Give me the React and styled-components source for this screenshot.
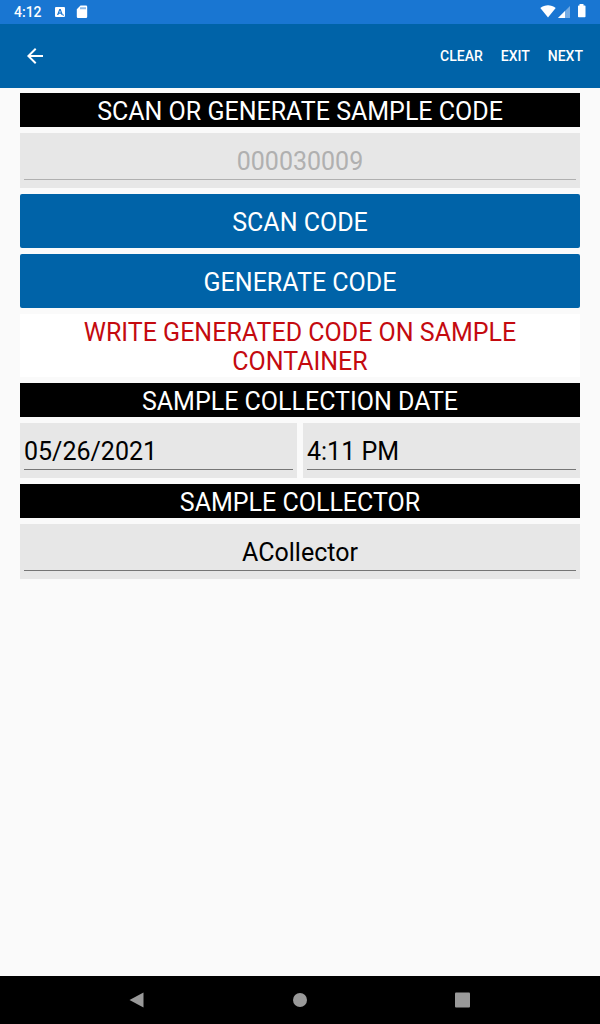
import React from "react";
import styled, { createGlobalStyle } from "styled-components";

const GlobalStyle = createGlobalStyle`
  * { box-sizing: border-box; }
  body {
    margin: 0;
    background: #fafafa;
    font-family: Roboto, "Liberation Sans", sans-serif;
  }
  button, input { font-family: inherit; margin: 0; }
`;

const Screen = styled.div`
  min-height: 100vh;
  display: flex;
  flex-direction: column;
`;

const StatusBar = styled.div`
  height: 24px;
  padding: 0 12px 0 14px;
  display: flex;
  align-items: center;
  justify-content: space-between;
  background: #1976d2;
  color: #fff;
`;

const StatusGroup = styled.div`
  display: flex;
  align-items: center;
`;

const Clock = styled.span`
  font-size: 14px;
  line-height: 24px;
  font-weight: 500;
  margin-right: 12px;
`;

const Glyph = styled.svg`
  display: block;
  fill: currentColor;
`;

const AppBar = styled.header`
  height: 64px;
  padding: 0 8px 0 15px;
  display: flex;
  align-items: center;
  justify-content: space-between;
  background: #0063a8;
  color: #fff;
`;

const BackButton = styled.button`
  width: 40px;
  height: 40px;
  padding: 0;
  display: grid;
  place-items: center;
  border: 0;
  background: none;
  color: inherit;
`;

const Actions = styled.nav`
  display: flex;
`;

const ActionButton = styled.button`
  height: 40px;
  padding: 0 9px;
  border: 0;
  background: none;
  color: inherit;
  font-size: 14px;
  font-weight: 500;
`;

const Form = styled.main`
  flex: 1;
  padding: 5px 20px;
  display: flex;
  flex-direction: column;
  gap: 6px;
`;

const SectionTitle = styled.h2`
  margin: 0;
  padding: 4px 0 1px;
  background: #000;
  color: #fff;
  font-size: 25px;
  line-height: 29px;
  font-weight: 400;
  text-align: center;
`;

const Field = styled.div`
  flex: 1;
  min-width: 0;
  padding: 8px 4px;
  background: #e7e7e7;
`;

const FieldRow = styled.div`
  display: flex;
  gap: 6px;
`;

const TextInput = styled.input`
  display: block;
  width: 100%;
  height: 39px;
  padding: 3px 0 0;
  border: 0;
  border-bottom: 1px solid #767676;
  border-radius: 0;
  outline: 0;
  background: none;
  color: #000;
  font-size: 25px;
  text-align: ${(p) => p.$align || "left"};

  &:disabled {
    color: #b0b0b0;
    border-bottom-color: #b0b0b0;
  }
`;

const PrimaryButton = styled.button`
  height: 54px;
  padding: 3px 0 0;
  border: 0;
  border-radius: 2px;
  background: #0063a8;
  color: #fff;
  font-size: 25px;
`;

const Notice = styled.p`
  margin: 0;
  padding: 4px 20px 1px;
  background: #fff;
  color: #c40a0f;
  font-size: 25px;
  line-height: 29px;
  text-align: center;
`;

const NavBar = styled.nav`
  height: 48px;
  padding: 0 56px;
  display: flex;
  align-items: center;
  background: #000;
  color: #999;
`;

const NavButton = styled.button`
  flex: 1;
  height: 48px;
  padding: 0;
  display: grid;
  place-items: center;
  border: 0;
  background: none;
  color: inherit;
`;

export default function App() {
  return (
    <>
      <GlobalStyle />
      <Screen>
        <StatusBar>
          <StatusGroup>
            <Clock>4:12</Clock>
            <Glyph width="34" height="16" viewBox="0 0 34 16" aria-hidden="true">
              <path
                fillRule="evenodd"
                d="M2 3h8a1 1 0 0 1 1 1v8a1 1 0 0 1-1 1H2a1 1 0 0 1-1-1V4a1 1 0 0 1 1-1zM5.3 5 3 11h1.4l.4-1.300h2.300L7.500 11h1.400L6.700 5zM6 6.400l.8 2.200H5.200zM8.700 10.600h1.100v1.100H8.700z"
              />
              <path
                fillRule="evenodd"
                d="M26.500 1.500h5.500a1.200 1.200 0 0 1 1.200 1.200v10.100a1.200 1.200 0 0 1-1.200 1.200h-8a1.200 1.200 0 0 1-1.200-1.200V5.200zM26.500 3.300v2h1v-2zM28.500 3.300v2h1v-2zM30.500 3.300v2h1v-2z"
              />
            </Glyph>
          </StatusGroup>
          <Glyph width="48" height="16" viewBox="0 0 48 16" aria-hidden="true">
            <path d="M8 13.500 0.300 3.900C4.900 0.300 11.100 0.300 15.700 3.900z" />
            <path d="M30 2v12H18z" opacity="0.4" />
            <path d="M25 7v7h-7z" />
            <path d="M39.500 0h4v1.500h1.300q.7 0 .7.700v10.300q0 .7-.7.700h-6.100q-.7 0-.7-.7V2.200q0-.7.700-.7h.8z" />
          </Glyph>
        </StatusBar>

        <AppBar>
          <BackButton type="button" aria-label="Back">
            <Glyph width="24" height="24" viewBox="0 0 24 24" aria-hidden="true">
              <path d="M20 11H7.830l5.590-5.590L12 4l-8 8 8 8 1.410-1.410L7.830 13H20z" />
            </Glyph>
          </BackButton>
          <Actions>
            <ActionButton type="button">CLEAR</ActionButton>
            <ActionButton type="button">EXIT</ActionButton>
            <ActionButton type="button">NEXT</ActionButton>
          </Actions>
        </AppBar>

        <Form>
          <SectionTitle id="code-title">SCAN OR GENERATE SAMPLE CODE</SectionTitle>
          <FieldRow>
            <Field>
              <TextInput aria-labelledby="code-title" $align="center" defaultValue="000030009" disabled />
            </Field>
          </FieldRow>
          <PrimaryButton type="button">SCAN CODE</PrimaryButton>
          <PrimaryButton type="button">GENERATE CODE</PrimaryButton>
          <Notice>WRITE GENERATED CODE ON SAMPLE CONTAINER</Notice>
          <SectionTitle id="date-title">SAMPLE COLLECTION DATE</SectionTitle>
          <FieldRow>
            <Field>
              <TextInput aria-label="Collection date" defaultValue="05/26/2021" />
            </Field>
            <Field>
              <TextInput aria-label="Collection time" defaultValue="4:11 PM" />
            </Field>
          </FieldRow>
          <SectionTitle id="collector-title">SAMPLE COLLECTOR</SectionTitle>
          <FieldRow>
            <Field>
              <TextInput aria-labelledby="collector-title" $align="center" defaultValue="ACollector" />
            </Field>
          </FieldRow>
        </Form>

        <NavBar aria-label="System">
          <NavButton type="button" aria-label="Back">
            <Glyph width="16" height="16" viewBox="0 0 16 16" aria-hidden="true">
              <path d="M14.500 0.500v15L0.500 8z" />
            </Glyph>
          </NavButton>
          <NavButton type="button" aria-label="Home">
            <Glyph width="16" height="16" viewBox="0 0 16 16" aria-hidden="true">
              <circle cx="8" cy="8" r="7" />
            </Glyph>
          </NavButton>
          <NavButton type="button" aria-label="Recent apps">
            <Glyph width="16" height="16" viewBox="0 0 16 16" aria-hidden="true">
              <rect x="0" y="0.500" width="15" height="15" rx="1" />
            </Glyph>
          </NavButton>
        </NavBar>
      </Screen>
    </>
  );
}
